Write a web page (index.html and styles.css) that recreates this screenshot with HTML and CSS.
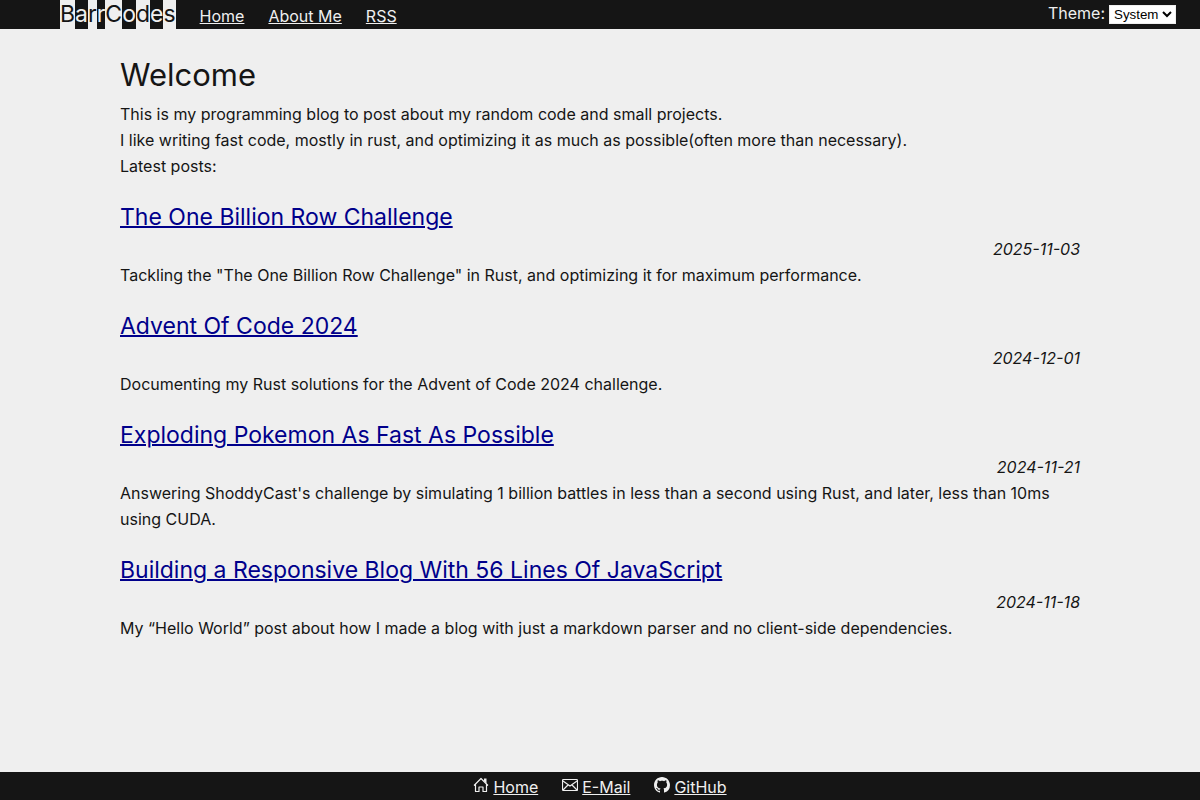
FILE: index.html
```
<!DOCTYPE html>
<html lang="en">
<head>
    <meta charset="UTF-8">
    <meta name="viewport" content="width=device-width, initial-scale=1.0">
    <title>BarrCodes</title>
    <link rel="stylesheet" href="styles.css">
</head>
<body>
    <header class="site-header">
        <div class="logo"><span>B</span><span>a</span><span>r</span><span>r</span><span>C</span><span>o</span><span>d</span><span>e</span><span>s</span></div>
        <nav class="nav">
            <a href="#home">Home</a>
            <a href="#about">About Me</a>
            <a href="#rss">RSS</a>
        </nav>
        <div class="theme">
            <label for="theme">Theme:</label>
            <select id="theme" name="theme">
                <option>System</option>
                <option>Light</option>
                <option>Dark</option>
            </select>
        </div>
    </header>

    <main class="content">
        <h1>Welcome</h1>
        <p>This is my programming blog to post about my random code and small projects.</p>
        <p>I like writing fast code, mostly in rust, and optimizing it as much as possible(often more than necessary).</p>
        <p>Latest posts:</p>

        <article class="post">
            <h2><a href="#one-billion-rows">The One Billion Row Challenge</a></h2>
            <time datetime="2025-11-03">2025-11-03</time>
            <p>Tackling the "The One Billion Row Challenge" in Rust, and optimizing it for maximum performance.</p>
        </article>
        <article class="post">
            <h2><a href="#advent-of-code">Advent Of Code 2024</a></h2>
            <time datetime="2024-12-01">2024-12-01</time>
            <p>Documenting my Rust solutions for the Advent of Code 2024 challenge.</p>
        </article>
        <article class="post">
            <h2><a href="#exploding-pokemon">Exploding Pokemon As Fast As Possible</a></h2>
            <time datetime="2024-11-21">2024-11-21</time>
            <p>Answering ShoddyCast's challenge by simulating 1 billion battles in less than a second using Rust, and later, less than 10ms using CUDA.</p>
        </article>
        <article class="post">
            <h2><a href="#responsive-blog">Building a Responsive Blog With 56 Lines Of JavaScript</a></h2>
            <time datetime="2024-11-18">2024-11-18</time>
            <p>My “Hello World” post about how I made a blog with just a markdown parser and no client-side dependencies.</p>
        </article>
    </main>

    <footer class="site-footer">
        <div class="footer-item">
            <svg class="icon" viewBox="0 0 16 16" aria-hidden="true">
                <path fill="none" stroke="currentColor" stroke-width="1.200" stroke-linejoin="round" d="M1 8.500 8 1.500l7 7M2.500 7.500v7H6V10h4v4.500h3.500v-7"/>
                <path fill="currentColor" d="M11 1.500h2.500v5L11 4z"/>
            </svg>
            <a href="#home">Home</a>
        </div>
        <div class="footer-item">
            <svg class="icon" viewBox="0 0 16 16" aria-hidden="true">
                <rect x=".5" y="2.500" width="15" height="11" rx="1" fill="none" stroke="currentColor" stroke-width="1.200"/>
                <path fill="none" stroke="currentColor" stroke-width="1.200" d="M1 4 8 9l7-5M1 13l5-5M15 13l-5-5"/>
            </svg>
            <a href="#mail">E-Mail</a>
        </div>
        <div class="footer-item">
            <svg class="icon" viewBox="0 0 16 16" aria-hidden="true">
                <path fill="currentColor" d="M8 0C3.580 0 0 3.580 0 8c0 3.540 2.290 6.530 5.470 7.590.4.070.55-.17.55-.38 0-.19-.01-.82-.01-1.490-2.010.37-2.530-.49-2.690-.94-.09-.23-.48-.94-.82-1.130-.28-.15-.68-.52-.01-.53.63-.01 1.080.58 1.230.82.72 1.210 1.870.87 2.330.66.07-.52.28-.87.51-1.070-1.780-.2-3.640-.89-3.640-3.950 0-.87.31-1.590.82-2.150-.08-.2-.36-1.020.08-2.120 0 0 .67-.21 2.200.82.64-.18 1.320-.27 2-.27s1.360.09 2 .27c1.530-1.040 2.200-.82 2.200-.82.44 1.100.16 1.920.08 2.120.51.56.82 1.270.82 2.150 0 3.070-1.870 3.750-3.650 3.950.29.25.54.73.54 1.480 0 1.070-.01 1.930-.01 2.200 0 .21.15.46.55.38A8.010 8.010 0 0 0 16 8c0-4.420-3.580-8-8-8z"/>
            </svg>
            <a href="#github">GitHub</a>
        </div>
    </footer>
</body>
</html>
```
FILE: styles.css
```
* {
    box-sizing: border-box;
    margin: 0;
    padding: 0;
}
body {
    display: flex;
    flex-direction: column;
    min-height: 100vh;
    font-family: Inter, sans-serif;
    font-size: 16px;
    line-height: 26px;
    color: #151515;
    background-color: #efefef;
}
.site-header {
    display: flex;
    gap: 24px;
    padding: 0 24px 0 5%;
    color: #efefef;
    background-color: #151515;
}
.logo {
    display: flex;
    font-size: 23px;
    line-height: 29px;
}
.logo span {
    color: #151515;
    background-color: #efefef;
}
.logo span:nth-child(even) {
    color: #efefef;
    background-color: #151515;
}
.nav {
    display: flex;
    gap: 24px;
    padding-top: 3px;
}
.nav a,
.footer-item a {
    color: inherit;
}
.theme {
    display: flex;
    align-items: center;
    gap: 4px;
    margin-left: auto;
}
.theme label {
    padding-bottom: 3px;
}
.theme select {
    font-family: "Liberation Sans", Arial, sans-serif;
    color: #000;
    background-color: #fff;
    border-color: #efefef;
}
.content {
    flex: 1;
    padding: 20px 10%;
}
h1,
h2 {
    font-weight: 400;
}
h1 {
    font-size: 31px;
    line-height: 52px;
}
h2 {
    font-size: 23px;
    line-height: 38px;
}
h2 a {
    color: #00008b;
    text-decoration-thickness: 2px;
}
.post {
    margin-top: 19px;
}
.post time {
    display: block;
    font-style: italic;
    text-align: right;
}
.site-footer {
    display: flex;
    justify-content: center;
    gap: 24px;
    padding-top: 2px;
    color: #efefef;
    background-color: #151515;
}
.footer-item {
    display: flex;
    gap: 4px;
}
.icon {
    width: 16px;
    height: 16px;
    margin-top: 3px;
}
```
